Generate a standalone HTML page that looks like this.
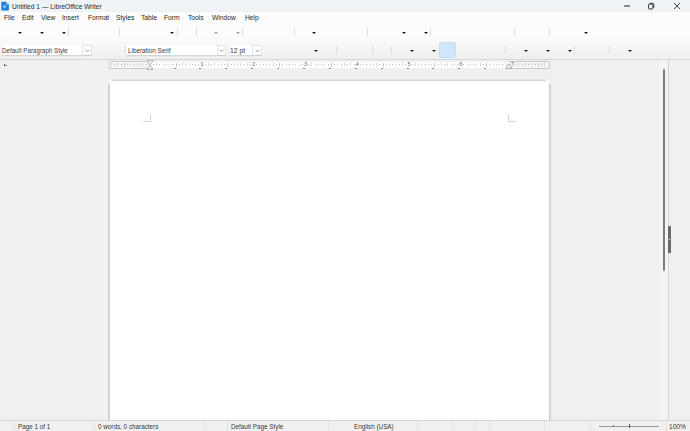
<!DOCTYPE html><html><head><meta charset="utf-8"><style>
*{margin:0;padding:0;box-sizing:border-box}
html,body{width:690px;height:431px;overflow:hidden;background:#f0f0f0;font-family:"Liberation Sans",sans-serif;color:#1a1a1a}
div,svg,span{position:absolute}
.t{white-space:nowrap;color:#333}
.mi{top:13.2px;font-size:7.8px;line-height:9px;transform:scaleX(0.86);transform-origin:0 0;color:#1e1e1e}
.arr{width:0;height:0;border-left:2.3px solid transparent;border-right:2.3px solid transparent;border-top:2.8px solid #1a1a1a}
.arrg{border-top-color:#9a9a9a}
.sep{width:1px;background:#dddddd}
.combo{background:#fff;border-radius:1px;box-shadow:0 1px 0 #d3d3d3,1px 0 0 #e6e6e6,-1px 0 0 #efefef,0 -1px 0 #f3f3f3}
.ct{font-size:7.8px;line-height:9px;color:#3a3a3a;white-space:nowrap;transform-origin:0 0}
.st{top:421.6px;font-size:7.8px;line-height:10px;transform:scaleX(0.81);transform-origin:0 0;color:#383838;white-space:nowrap}
.ssep{top:421px;height:10px;width:1px;background:#e3e3e3}
.tk{background:#a9a9a9;width:1px}
.rn{font-size:5.5px;line-height:5px;color:#666;top:62.2px}
</style></head><body>
<div style="left:0;top:0;width:690px;height:12px;background:#eef3f8"></div>
<svg style="left:0;top:0" width="12" height="12" viewBox="0 0 12 12"><path d="M1.3 2.3Q1.3 1.7 1.9 1.7H6.1L8.9 4.5V10Q8.9 10.6 8.3 10.6H1.9Q1.3 10.6 1.3 10Z" fill="#1b80d8"/><path d="M6.1 1.7L8.9 4.5H6.7Q6.1 4.5 6.1 3.9Z" fill="#86d6f6"/><rect x="3" y="5.2" width="3.3" height="3" fill="#74b9ee"/></svg>
<div class="t" style="left:12px;top:1.5px;font-size:8.1px;line-height:9px;transform:scaleX(0.82);transform-origin:0 0;color:#2a2a2a">Untitled 1 — LibreOffice Writer</div>
<div style="left:623.5px;top:5.4px;width:6px;height:1.2px;background:#8a8a8a"></div>
<svg style="left:647px;top:2px" width="9" height="9" viewBox="0 0 9 9"><rect x="1.5" y="2.1" width="4.4" height="4.9" rx="1" fill="none" stroke="#333" stroke-width="1"/><path d="M2.6 1.3H5.6A1.2 1.2 0 0 1 6.8 2.5V5.8" fill="none" stroke="#333" stroke-width="1"/></svg>
<svg style="left:673px;top:2px" width="8" height="8" viewBox="0 0 8 8"><path d="M1 1L7 7M7 1L1 7" stroke="#333" stroke-width="0.9"/></svg>
<div style="left:0;top:12px;width:690px;height:47px;background:linear-gradient(#fdfdfd 0,#fbfbfb 26px,#efefef 47px)"></div>
<div class="t mi" style="left:3.5px">File</div>
<div class="t mi" style="left:21.5px">Edit</div>
<div class="t mi" style="left:41px">View</div>
<div class="t mi" style="left:62px">Insert</div>
<div class="t mi" style="left:87.5px">Format</div>
<div class="t mi" style="left:116px">Styles</div>
<div class="t mi" style="left:141px">Table</div>
<div class="t mi" style="left:164px">Form</div>
<div class="t mi" style="left:188px">Tools</div>
<div class="t mi" style="left:212px">Window</div>
<div class="t mi" style="left:244.5px">Help</div>
<div class="arr" style="left:18.0px;top:31.6px"></div>
<div class="arr" style="left:40.0px;top:31.6px"></div>
<div class="arr" style="left:62.0px;top:31.6px"></div>
<div class="arr" style="left:170.2px;top:31.6px"></div>
<div class="arr" style="left:312.0px;top:31.6px"></div>
<div class="arr" style="left:402.0px;top:31.6px"></div>
<div class="arr" style="left:424.0px;top:31.6px"></div>
<div class="arr" style="left:583.5px;top:31.6px"></div>
<div class="arr arrg" style="left:214.2px;top:31.6px"></div>
<div class="arr arrg" style="left:236.2px;top:31.6px"></div>
<div class="sep" style="left:68px;top:27.7px;height:8px"></div>
<div class="sep" style="left:119px;top:27.7px;height:8px"></div>
<div class="sep" style="left:177px;top:27.7px;height:8px"></div>
<div class="sep" style="left:196px;top:27.7px;height:8px"></div>
<div class="sep" style="left:242px;top:27.7px;height:8px"></div>
<div class="sep" style="left:294px;top:27.7px;height:8px"></div>
<div class="sep" style="left:367px;top:27.7px;height:8px"></div>
<div class="sep" style="left:430px;top:27.7px;height:8px"></div>
<div class="sep" style="left:514px;top:27.7px;height:8px"></div>
<div class="sep" style="left:549px;top:27.7px;height:8px"></div>
<div style="left:2px;top:45px;width:80.3px;height:10px;background:#fff;box-shadow:0 1px 0 #d6d6d6,0 2px 0 #e9e9e9,-0.5px 0 0 #eaeaea"><span class="ct" style="left:0.2px;top:0.8px;transform:scaleX(0.795)">Default Paragraph Style</span></div>
<div style="left:82.3px;top:44.5px;width:9.6px;height:11px;background:#fff;border:1px solid #e3e3e3;border-bottom-color:#cdcdcd;border-radius:1px"><svg style="left:1.6px;top:3.1px" width="5" height="4" viewBox="0 0 5 4"><path d="M0.5 0.8L2.5 2.8L4.5 0.8" fill="none" stroke="#6f6f6f" stroke-width="0.75"/></svg></div>
<div style="left:126px;top:45px;width:90.6px;height:10px;background:#fff;box-shadow:0 1px 0 #d6d6d6,0 2px 0 #e9e9e9,-0.5px 0 0 #eaeaea"><span class="ct" style="left:1.6px;top:0.8px;transform:scaleX(0.81)">Liberation Serif</span></div>
<div style="left:216.6px;top:44.5px;width:9.6px;height:11px;background:#fff;border:1px solid #e3e3e3;border-bottom-color:#cdcdcd;border-radius:1px"><svg style="left:1.6px;top:3.1px" width="5" height="4" viewBox="0 0 5 4"><path d="M0.5 0.8L2.5 2.8L4.5 0.8" fill="none" stroke="#6f6f6f" stroke-width="0.75"/></svg></div>
<div style="left:229.5px;top:45px;width:22.80000000000001px;height:10px;background:#fff;box-shadow:0 1px 0 #d6d6d6,0 2px 0 #e9e9e9,-0.5px 0 0 #eaeaea"><span class="ct" style="left:0.6px;top:0.8px;transform:scaleX(0.87)">12 pt</span></div>
<div style="left:252.3px;top:44.5px;width:9.6px;height:11px;background:#fff;border:1px solid #e3e3e3;border-bottom-color:#cdcdcd;border-radius:1px"><svg style="left:1.6px;top:3.1px" width="5" height="4" viewBox="0 0 5 4"><path d="M0.5 0.8L2.5 2.8L4.5 0.8" fill="none" stroke="#6f6f6f" stroke-width="0.75"/></svg></div>
<div class="arr" style="left:314.0px;top:49.6px"></div>
<div class="arr" style="left:409.5px;top:49.6px"></div>
<div class="arr" style="left:431.5px;top:49.6px"></div>
<div class="arr" style="left:524.0px;top:49.6px"></div>
<div class="arr" style="left:545.5px;top:49.6px"></div>
<div class="arr" style="left:567.5px;top:49.6px"></div>
<div class="arr" style="left:627.5px;top:49.6px"></div>
<div class="sep" style="left:125px;top:46px;height:8px"></div>
<div class="sep" style="left:336px;top:46px;height:8px"></div>
<div class="sep" style="left:372px;top:46px;height:8px"></div>
<div class="sep" style="left:391px;top:46px;height:8px"></div>
<div class="sep" style="left:505px;top:46px;height:8px"></div>
<div class="sep" style="left:574px;top:46px;height:8px"></div>
<div class="sep" style="left:609px;top:46px;height:8px"></div>
<div style="left:439px;top:42px;width:17px;height:16px;background:#cfe6fb;border:1px solid #c2dff8;border-radius:2px"></div>
<div style="left:0;top:59px;width:690px;height:1px;background:#d6d6d6"></div>
<div style="left:109px;top:60.5px;width:441px;height:8.5px;background:#fff;border:1px solid #efefef;border-radius:1.5px"></div>
<div style="left:109px;top:61px;width:41px;height:8px;background:#f4f4f4;border:1px solid #c9c9c9;border-right:none;border-radius:1.5px 0 0 1.5px"></div>
<div style="left:508px;top:61px;width:42px;height:8px;background:#f4f4f4;border:1px solid #c9c9c9;border-left:none;border-radius:0 1.5px 1.5px 0"></div>
<div class="tk" style="left:111px;top:63.2px;height:2.4px;background:#d6d6d6"></div>
<div class="tk" style="left:114px;top:64px;width:1px;height:1px;background:#b8b8b8"></div>
<div class="tk" style="left:117px;top:63.2px;height:2.4px;background:#d6d6d6"></div>
<div class="tk" style="left:121px;top:64px;width:1px;height:1px;background:#b8b8b8"></div>
<div class="tk" style="left:124px;top:63px;height:3.5px;background:#c6c6c6"></div>
<div class="tk" style="left:127px;top:64px;width:1px;height:1px;background:#b8b8b8"></div>
<div class="tk" style="left:130px;top:63.2px;height:2.4px;background:#d6d6d6"></div>
<div class="tk" style="left:134px;top:64px;width:1px;height:1px;background:#b8b8b8"></div>
<div class="tk" style="left:137px;top:63.2px;height:2.4px;background:#d6d6d6"></div>
<div class="tk" style="left:140px;top:64px;width:1px;height:1px;background:#b8b8b8"></div>
<div class="tk" style="left:143px;top:63.2px;height:2.4px;background:#d6d6d6"></div>
<div class="tk" style="left:146px;top:64px;width:1px;height:1px;background:#b8b8b8"></div>
<div class="tk" style="left:153px;top:64px;width:1px;height:1px;background:#b8b8b8"></div>
<div class="tk" style="left:156px;top:63.2px;height:2.4px;background:#d6d6d6"></div>
<div class="tk" style="left:159px;top:64px;width:1px;height:1px;background:#b8b8b8"></div>
<div class="tk" style="left:163px;top:63.2px;height:2.4px;background:#d6d6d6"></div>
<div class="tk" style="left:166px;top:64px;width:1px;height:1px;background:#b8b8b8"></div>
<div class="tk" style="left:169px;top:63.2px;height:2.4px;background:#d6d6d6"></div>
<div class="tk" style="left:172px;top:64px;width:1px;height:1px;background:#b8b8b8"></div>
<div class="tk" style="left:176px;top:63px;height:3.5px;background:#c6c6c6"></div>
<div class="tk" style="left:179px;top:64px;width:1px;height:1px;background:#b8b8b8"></div>
<div class="tk" style="left:182px;top:63.2px;height:2.4px;background:#d6d6d6"></div>
<div class="tk" style="left:185px;top:64px;width:1px;height:1px;background:#b8b8b8"></div>
<div class="tk" style="left:189px;top:63.2px;height:2.4px;background:#d6d6d6"></div>
<div class="tk" style="left:192px;top:64px;width:1px;height:1px;background:#b8b8b8"></div>
<div class="tk" style="left:195px;top:63.2px;height:2.4px;background:#d6d6d6"></div>
<div class="tk" style="left:198px;top:64px;width:1px;height:1px;background:#b8b8b8"></div>
<div class="rn" style="left:200.5px">1</div>
<div class="tk" style="left:205px;top:64px;width:1px;height:1px;background:#b8b8b8"></div>
<div class="tk" style="left:208px;top:63.2px;height:2.4px;background:#d6d6d6"></div>
<div class="tk" style="left:211px;top:64px;width:1px;height:1px;background:#b8b8b8"></div>
<div class="tk" style="left:214px;top:63.2px;height:2.4px;background:#d6d6d6"></div>
<div class="tk" style="left:218px;top:64px;width:1px;height:1px;background:#b8b8b8"></div>
<div class="tk" style="left:221px;top:63.2px;height:2.4px;background:#d6d6d6"></div>
<div class="tk" style="left:224px;top:64px;width:1px;height:1px;background:#b8b8b8"></div>
<div class="tk" style="left:227px;top:63px;height:3.5px;background:#c6c6c6"></div>
<div class="tk" style="left:231px;top:64px;width:1px;height:1px;background:#b8b8b8"></div>
<div class="tk" style="left:234px;top:63.2px;height:2.4px;background:#d6d6d6"></div>
<div class="tk" style="left:237px;top:64px;width:1px;height:1px;background:#b8b8b8"></div>
<div class="tk" style="left:240px;top:63.2px;height:2.4px;background:#d6d6d6"></div>
<div class="tk" style="left:244px;top:64px;width:1px;height:1px;background:#b8b8b8"></div>
<div class="tk" style="left:247px;top:63.2px;height:2.4px;background:#d6d6d6"></div>
<div class="tk" style="left:250px;top:64px;width:1px;height:1px;background:#b8b8b8"></div>
<div class="rn" style="left:252.2px">2</div>
<div class="tk" style="left:256px;top:64px;width:1px;height:1px;background:#b8b8b8"></div>
<div class="tk" style="left:260px;top:63.2px;height:2.4px;background:#d6d6d6"></div>
<div class="tk" style="left:263px;top:64px;width:1px;height:1px;background:#b8b8b8"></div>
<div class="tk" style="left:266px;top:63.2px;height:2.4px;background:#d6d6d6"></div>
<div class="tk" style="left:269px;top:64px;width:1px;height:1px;background:#b8b8b8"></div>
<div class="tk" style="left:273px;top:63.2px;height:2.4px;background:#d6d6d6"></div>
<div class="tk" style="left:276px;top:64px;width:1px;height:1px;background:#b8b8b8"></div>
<div class="tk" style="left:279px;top:63px;height:3.5px;background:#c6c6c6"></div>
<div class="tk" style="left:282px;top:64px;width:1px;height:1px;background:#b8b8b8"></div>
<div class="tk" style="left:286px;top:63.2px;height:2.4px;background:#d6d6d6"></div>
<div class="tk" style="left:289px;top:64px;width:1px;height:1px;background:#b8b8b8"></div>
<div class="tk" style="left:292px;top:63.2px;height:2.4px;background:#d6d6d6"></div>
<div class="tk" style="left:295px;top:64px;width:1px;height:1px;background:#b8b8b8"></div>
<div class="tk" style="left:299px;top:63.2px;height:2.4px;background:#d6d6d6"></div>
<div class="tk" style="left:302px;top:64px;width:1px;height:1px;background:#b8b8b8"></div>
<div class="rn" style="left:304.0px">3</div>
<div class="tk" style="left:308px;top:64px;width:1px;height:1px;background:#b8b8b8"></div>
<div class="tk" style="left:311px;top:63.2px;height:2.4px;background:#d6d6d6"></div>
<div class="tk" style="left:315px;top:64px;width:1px;height:1px;background:#b8b8b8"></div>
<div class="tk" style="left:318px;top:63.2px;height:2.4px;background:#d6d6d6"></div>
<div class="tk" style="left:321px;top:64px;width:1px;height:1px;background:#b8b8b8"></div>
<div class="tk" style="left:324px;top:63.2px;height:2.4px;background:#d6d6d6"></div>
<div class="tk" style="left:328px;top:64px;width:1px;height:1px;background:#b8b8b8"></div>
<div class="tk" style="left:331px;top:63px;height:3.5px;background:#c6c6c6"></div>
<div class="tk" style="left:334px;top:64px;width:1px;height:1px;background:#b8b8b8"></div>
<div class="tk" style="left:337px;top:63.2px;height:2.4px;background:#d6d6d6"></div>
<div class="tk" style="left:341px;top:64px;width:1px;height:1px;background:#b8b8b8"></div>
<div class="tk" style="left:344px;top:63.2px;height:2.4px;background:#d6d6d6"></div>
<div class="tk" style="left:347px;top:64px;width:1px;height:1px;background:#b8b8b8"></div>
<div class="tk" style="left:350px;top:63.2px;height:2.4px;background:#d6d6d6"></div>
<div class="tk" style="left:354px;top:64px;width:1px;height:1px;background:#b8b8b8"></div>
<div class="rn" style="left:355.7px">4</div>
<div class="tk" style="left:360px;top:64px;width:1px;height:1px;background:#b8b8b8"></div>
<div class="tk" style="left:363px;top:63.2px;height:2.4px;background:#d6d6d6"></div>
<div class="tk" style="left:366px;top:64px;width:1px;height:1px;background:#b8b8b8"></div>
<div class="tk" style="left:370px;top:63.2px;height:2.4px;background:#d6d6d6"></div>
<div class="tk" style="left:373px;top:64px;width:1px;height:1px;background:#b8b8b8"></div>
<div class="tk" style="left:376px;top:63.2px;height:2.4px;background:#d6d6d6"></div>
<div class="tk" style="left:379px;top:64px;width:1px;height:1px;background:#b8b8b8"></div>
<div class="tk" style="left:383px;top:63px;height:3.5px;background:#c6c6c6"></div>
<div class="tk" style="left:386px;top:64px;width:1px;height:1px;background:#b8b8b8"></div>
<div class="tk" style="left:389px;top:63.2px;height:2.4px;background:#d6d6d6"></div>
<div class="tk" style="left:392px;top:64px;width:1px;height:1px;background:#b8b8b8"></div>
<div class="tk" style="left:396px;top:63.2px;height:2.4px;background:#d6d6d6"></div>
<div class="tk" style="left:399px;top:64px;width:1px;height:1px;background:#b8b8b8"></div>
<div class="tk" style="left:402px;top:63.2px;height:2.4px;background:#d6d6d6"></div>
<div class="tk" style="left:405px;top:64px;width:1px;height:1px;background:#b8b8b8"></div>
<div class="rn" style="left:407.5px">5</div>
<div class="tk" style="left:412px;top:64px;width:1px;height:1px;background:#b8b8b8"></div>
<div class="tk" style="left:415px;top:63.2px;height:2.4px;background:#d6d6d6"></div>
<div class="tk" style="left:418px;top:64px;width:1px;height:1px;background:#b8b8b8"></div>
<div class="tk" style="left:421px;top:63.2px;height:2.4px;background:#d6d6d6"></div>
<div class="tk" style="left:425px;top:64px;width:1px;height:1px;background:#b8b8b8"></div>
<div class="tk" style="left:428px;top:63.2px;height:2.4px;background:#d6d6d6"></div>
<div class="tk" style="left:431px;top:64px;width:1px;height:1px;background:#b8b8b8"></div>
<div class="tk" style="left:434px;top:63px;height:3.5px;background:#c6c6c6"></div>
<div class="tk" style="left:438px;top:64px;width:1px;height:1px;background:#b8b8b8"></div>
<div class="tk" style="left:441px;top:63.2px;height:2.4px;background:#d6d6d6"></div>
<div class="tk" style="left:444px;top:64px;width:1px;height:1px;background:#b8b8b8"></div>
<div class="tk" style="left:447px;top:63.2px;height:2.4px;background:#d6d6d6"></div>
<div class="tk" style="left:451px;top:64px;width:1px;height:1px;background:#b8b8b8"></div>
<div class="tk" style="left:454px;top:63.2px;height:2.4px;background:#d6d6d6"></div>
<div class="tk" style="left:457px;top:64px;width:1px;height:1px;background:#b8b8b8"></div>
<div class="rn" style="left:459.3px">6</div>
<div class="tk" style="left:463px;top:64px;width:1px;height:1px;background:#b8b8b8"></div>
<div class="tk" style="left:467px;top:63.2px;height:2.4px;background:#d6d6d6"></div>
<div class="tk" style="left:470px;top:64px;width:1px;height:1px;background:#b8b8b8"></div>
<div class="tk" style="left:473px;top:63.2px;height:2.4px;background:#d6d6d6"></div>
<div class="tk" style="left:476px;top:64px;width:1px;height:1px;background:#b8b8b8"></div>
<div class="tk" style="left:480px;top:63.2px;height:2.4px;background:#d6d6d6"></div>
<div class="tk" style="left:483px;top:64px;width:1px;height:1px;background:#b8b8b8"></div>
<div class="tk" style="left:486px;top:63px;height:3.5px;background:#c6c6c6"></div>
<div class="tk" style="left:489px;top:64px;width:1px;height:1px;background:#b8b8b8"></div>
<div class="tk" style="left:493px;top:63.2px;height:2.4px;background:#d6d6d6"></div>
<div class="tk" style="left:496px;top:64px;width:1px;height:1px;background:#b8b8b8"></div>
<div class="tk" style="left:499px;top:63.2px;height:2.4px;background:#d6d6d6"></div>
<div class="tk" style="left:502px;top:64px;width:1px;height:1px;background:#b8b8b8"></div>
<div class="tk" style="left:506px;top:63.2px;height:2.4px;background:#d6d6d6"></div>
<div class="tk" style="left:509px;top:64px;width:1px;height:1px;background:#b8b8b8"></div>
<div class="rn" style="left:511.0px">7</div>
<div class="tk" style="left:515px;top:64px;width:1px;height:1px;background:#b8b8b8"></div>
<div class="tk" style="left:518px;top:63.2px;height:2.4px;background:#d6d6d6"></div>
<div class="tk" style="left:522px;top:64px;width:1px;height:1px;background:#b8b8b8"></div>
<div class="tk" style="left:525px;top:63.2px;height:2.4px;background:#d6d6d6"></div>
<div class="tk" style="left:528px;top:64px;width:1px;height:1px;background:#b8b8b8"></div>
<div class="tk" style="left:531px;top:63.2px;height:2.4px;background:#d6d6d6"></div>
<div class="tk" style="left:535px;top:64px;width:1px;height:1px;background:#b8b8b8"></div>
<div class="tk" style="left:538px;top:63px;height:3.5px;background:#c6c6c6"></div>
<div class="tk" style="left:541px;top:64px;width:1px;height:1px;background:#b8b8b8"></div>
<div class="tk" style="left:544px;top:63.2px;height:2.4px;background:#d6d6d6"></div>
<div style="left:174px;top:68px;width:2px;height:1px;background:#8c8c8c"></div>
<div style="left:199px;top:68px;width:2px;height:1px;background:#8c8c8c"></div>
<div style="left:225px;top:68px;width:2px;height:1px;background:#8c8c8c"></div>
<div style="left:251px;top:68px;width:2px;height:1px;background:#8c8c8c"></div>
<div style="left:277px;top:68px;width:2px;height:1px;background:#8c8c8c"></div>
<div style="left:303px;top:68px;width:2px;height:1px;background:#8c8c8c"></div>
<div style="left:329px;top:68px;width:2px;height:1px;background:#8c8c8c"></div>
<div style="left:355px;top:68px;width:2px;height:1px;background:#8c8c8c"></div>
<div style="left:381px;top:68px;width:2px;height:1px;background:#8c8c8c"></div>
<div style="left:407px;top:68px;width:2px;height:1px;background:#8c8c8c"></div>
<div style="left:432px;top:68px;width:2px;height:1px;background:#8c8c8c"></div>
<div style="left:458px;top:68px;width:2px;height:1px;background:#8c8c8c"></div>
<div style="left:484px;top:68px;width:2px;height:1px;background:#8c8c8c"></div>
<svg style="left:146px;top:60px" width="8" height="10" viewBox="0 0 8 10"><path d="M1 0.7h6L4 4.8zM1 9.3h6L4 5.2z" fill="#fff" stroke="#999" stroke-width="0.8"/></svg>
<svg style="left:505px;top:62px" width="8" height="7" viewBox="0 0 8 7"><path d="M1 6.3h6L4 2z" fill="#fff" stroke="#999" stroke-width="0.8"/></svg>
<div style="left:4px;top:64px;width:1px;height:2px;background:#555"></div><div style="left:5px;top:65px;width:2px;height:1px;background:#888"></div>
<div style="left:107px;top:84px;width:1px;height:336px;background:#f3f3f3"></div>
<div style="left:108px;top:84px;width:1px;height:336px;background:#cbcbcb"></div>
<div style="left:109px;top:84px;width:1px;height:336px;background:#d8d8d8"></div>
<div style="left:549px;top:84px;width:1px;height:336px;background:#d0d0d0"></div>
<div style="left:550px;top:84px;width:1px;height:336px;background:#dcdcdc"></div>
<div style="left:551px;top:84px;width:1px;height:336px;background:#e8e8e8"></div>
<div style="left:112px;top:78px;width:435px;height:1px;background:#f3f3f3"></div>
<div style="left:112px;top:79px;width:435px;height:1px;background:#e0e0e0"></div>
<div style="left:112px;top:80px;width:435px;height:1px;background:#d3d3d3"></div>
<div style="left:110px;top:81px;width:439px;height:339px;background:#fff"></div>
<div style="left:109px;top:80px;width:3px;height:4px;background:#f9f9f9"></div>
<div style="left:546px;top:80px;width:3px;height:4px;background:#f9f9f9"></div>
<div style="left:150px;top:114px;width:1px;height:8px;background:#d6d6d6"></div><div style="left:143px;top:121px;width:8px;height:1px;background:#d6d6d6"></div>
<div style="left:508px;top:114px;width:1px;height:8px;background:#d6d6d6"></div><div style="left:508px;top:121px;width:8px;height:1px;background:#d6d6d6"></div>
<div style="left:659px;top:60px;width:9px;height:360px;background:#f3f3f3"></div>
<div style="left:668px;top:60px;width:1px;height:360px;background:#d4d4d4"></div>
<div style="left:663px;top:69px;width:2px;height:202px;background:#7d7d7d;border-radius:1px"></div>
<div style="left:668.4px;top:226.3px;width:2.4px;height:26.4px;background:#6a6a6a;border-radius:0.5px"></div>
<div style="left:669px;top:239px;width:1px;height:1px;background:#fff"></div>
<div style="left:0;top:420px;width:690px;height:11px;background:#f0f0f0"></div>
<div style="left:0;top:420px;width:690px;height:1px;background:#d3d3d3"></div>
<div class="ssep" style="left:14px"></div>
<div class="ssep" style="left:94px"></div>
<div class="ssep" style="left:204px"></div>
<div class="ssep" style="left:227px"></div>
<div class="ssep" style="left:328px"></div>
<div class="ssep" style="left:417px"></div>
<div class="ssep" style="left:452px"></div>
<div class="ssep" style="left:475px"></div>
<div class="ssep" style="left:489px"></div>
<div class="ssep" style="left:544px"></div>
<div class="ssep" style="left:590px"></div>
<div class="ssep" style="left:666px"></div>
<div class="st" style="left:18px">Page 1 of 1</div>
<div class="st" style="left:98px">0 words, 0 characters</div>
<div class="st" style="left:231px">Default Page Style</div>
<div class="st" style="left:353.8px;transform:scaleX(0.81)">English (USA)</div>
<div class="st" style="left:669px;transform:scaleX(0.85)">100%</div>
<div style="left:599px;top:425.5px;width:60px;height:1px;background:#9a9a9a"></div>
<div style="left:613px;top:424.5px;width:1px;height:2.5px;background:#777"></div>
<div style="left:628.5px;top:424px;width:1px;height:3.5px;background:#555"></div>
</body></html>
